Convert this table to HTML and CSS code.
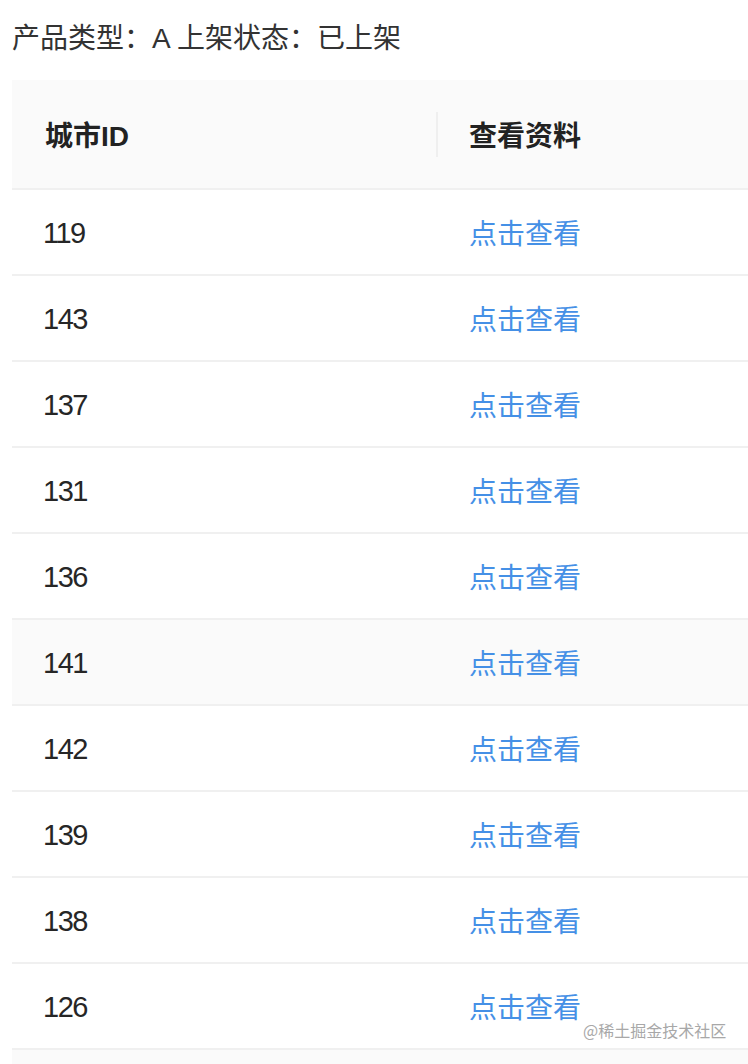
FILE: index.html
```html
<!DOCTYPE html>
<html lang="zh">
<head>
<meta charset="utf-8">
<link rel="stylesheet" href="styles.css">
</head>
<body>
<div class="page">
  <div class="title">产品类型：A 上架状态：已上架</div>
  <div class="table">
    <div class="row head">
      <div class="cell">城市ID</div>
      <div class="cell sep">查看资料</div>
    </div>
    <div class="row"><div class="cell num">119</div><div class="cell"><a class="link">点击查看</a></div></div>
    <div class="row"><div class="cell num">143</div><div class="cell"><a class="link">点击查看</a></div></div>
    <div class="row"><div class="cell num">137</div><div class="cell"><a class="link">点击查看</a></div></div>
    <div class="row"><div class="cell num">131</div><div class="cell"><a class="link">点击查看</a></div></div>
    <div class="row"><div class="cell num">136</div><div class="cell"><a class="link">点击查看</a></div></div>
    <div class="row hover"><div class="cell num">141</div><div class="cell"><a class="link">点击查看</a></div></div>
    <div class="row"><div class="cell num">142</div><div class="cell"><a class="link">点击查看</a></div></div>
    <div class="row"><div class="cell num">139</div><div class="cell"><a class="link">点击查看</a></div></div>
    <div class="row"><div class="cell num">138</div><div class="cell"><a class="link">点击查看</a></div></div>
    <div class="row"><div class="cell num">126</div><div class="cell"><a class="link">点击查看</a></div></div>
    <div class="row hover"><div class="cell"></div><div class="cell"></div></div>
  </div>
</div>
<div class="watermark">@稀土掘金技术社区</div>
</body>
</html>
```
FILE: styles.css
```css
html, body {
  margin: 0;
  padding: 0;
  background: #fff;
}
body {
  width: 748px;
  height: 1064px;
  overflow: hidden;
  position: relative;
  font-family: "Liberation Sans", "Noto Sans CJK SC", sans-serif;
}
.page {
  padding-left: 12px;
}
.title {
  font-size: 28px;
  line-height: 40px;
  padding: 19px 0 21px;
  color: #333;
  white-space: nowrap;
}
.table {
  width: 736px;
}
.row {
  display: grid;
  grid-template-columns: 424px 1fr;
  height: 84px;
  border-bottom: 2px solid #f0f0f0;
  font-size: 28px;
  color: #262626;
  background: #fff;
}
.row.head {
  height: 108px;
  background: #fafafa;
  font-weight: 600;
  color: #222;
}
.row.hover {
  background: #fafafa;
}
.cell {
  display: flex;
  align-items: center;
  padding: 0 33px;
  position: relative;
  white-space: nowrap;
}
.cell.num {
  font-size: 29px;
  letter-spacing: -1.5px;
  padding-left: 31px;
  padding-top: 2px;
}
.cell.sep::before {
  content: "";
  position: absolute;
  left: 0;
  top: 32px;
  height: 45px;
  width: 2px;
  background: #efefef;
}
.link {
  color: #4590e6;
  text-decoration: none;
  cursor: pointer;
}
.watermark {
  position: absolute;
  left: 583px;
  top: 1018px;
  font-family: "Noto Sans CJK SC", sans-serif;
  font-size: 16px;
  line-height: 24px;
  color: #a8a8a8;
  text-shadow: 0 0 2px #fff;
  white-space: nowrap;
}
```
